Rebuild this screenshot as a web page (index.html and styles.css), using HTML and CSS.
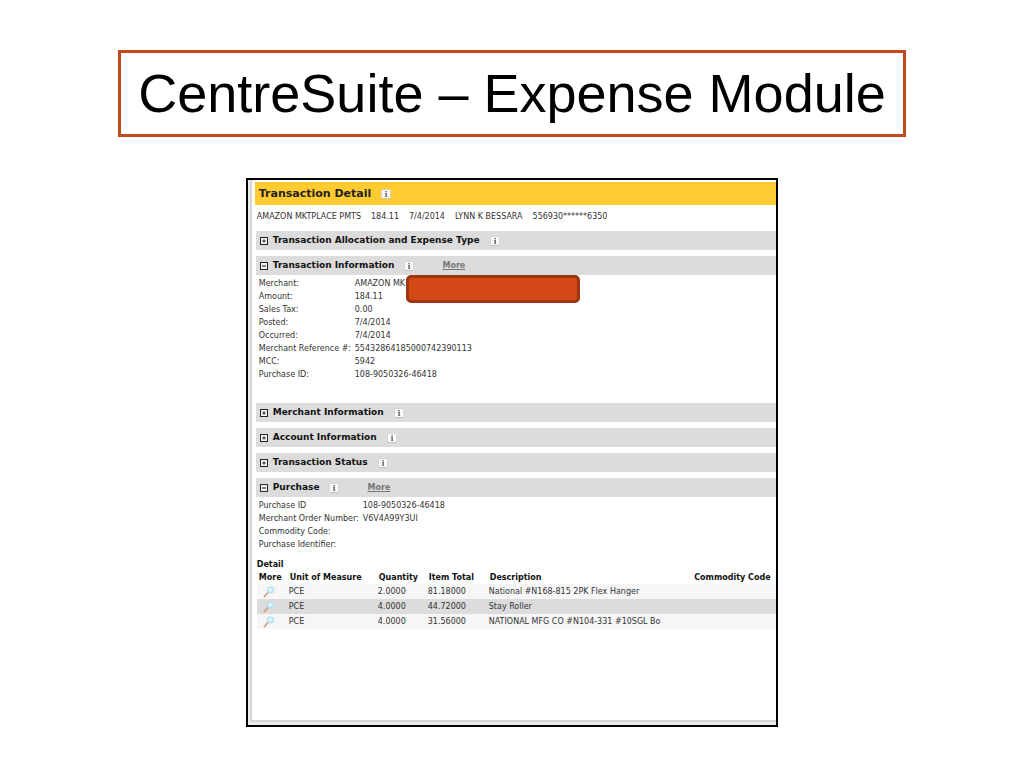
FILE: index.html
```html
<!DOCTYPE html>
<html lang="en">
<head>
  <meta charset="UTF-8" />
  <meta name="viewport" content="width=device-width, initial-scale=1" />
  <title>CentreSuite – Expense Module</title>
  <link rel="stylesheet" href="styles.css">
</head>
<body>

<!-- shared icons -->
<svg class="sprite" aria-hidden="true">
  <symbol id="plus" viewBox="0 0 8 8">
    <rect x="0.5" y="0.5" width="7" height="7" fill="#f4f4f4" stroke="#222"/>
    <path d="M2.200 4h3.600M4 2.200v3.600" stroke="#222" stroke-width="0.900"/>
  </symbol>
  <symbol id="minus" viewBox="0 0 8 8">
    <rect x="0.5" y="0.5" width="7" height="7" fill="#f4f4f4" stroke="#222"/>
    <path d="M2 4h4" stroke="#111"/>
  </symbol>
  <symbol id="info" viewBox="0 0 10 10">
    <rect x="0.5" y="0.5" width="9" height="9" rx="1.5" fill="#fbfbfb" stroke="#d2d6da"/>
    <path d="M0.8 9.5h8.4" stroke="#b4babf" stroke-width="0.7"/>
    <path d="M4.400 2h1.400v1.200H4.400zM4 4h1.800v3h.5v.8H4v-.8h.5V4.800H4z" fill="#555"/>
  </symbol>
  <symbol id="magnifier" viewBox="0 0 12 12">
    <path d="M1 11l4-4.500" stroke="#d69a68" stroke-width="1.6"/>
    <circle cx="7.500" cy="4" r="3" fill="#d9f3fc" stroke="#9fd6ee"/>
    <path d="M6 4.200a1.600 1.600 0 0 1 1.500-1.700" fill="none" stroke="#fff"/>
    <path d="M10 6.500l1-1.500V1" fill="none" stroke="#cbe8f5" stroke-width="0.6"/>
  </symbol>
</svg>

<header class="slide-title">
  <h1>CentreSuite – Expense Module</h1>
</header>

<main class="frame">
  <div class="panel">
    <div class="panel-title">
      <h2>Transaction Detail</h2>
      <button class="icon-btn" aria-label="About transaction detail"><svg class="info"><use href="#info"/></svg></button>
    </div>

    <p class="summary">
      <span>AMAZON MKTPLACE PMTS</span>
      <span>184.11</span>
      <span>7/4/2014</span>
      <span>LYNN K BESSARA</span>
      <span>556930******6350</span>
    </p>

    <section class="group">
      <div class="bar">
        <button class="icon-btn" aria-label="Expand"><svg class="toggle"><use href="#plus"/></svg></button>
        <h3>Transaction Allocation and Expense Type</h3>
        <button class="icon-btn" aria-label="Info"><svg class="info"><use href="#info"/></svg></button>
      </div>
    </section>

    <section class="group">
      <div class="bar">
        <button class="icon-btn" aria-label="Collapse"><svg class="toggle"><use href="#minus"/></svg></button>
        <h3>Transaction Information</h3>
        <button class="icon-btn" aria-label="Info"><svg class="info"><use href="#info"/></svg></button>
        <a class="more" href="#">More</a>
      </div>
      <dl class="fields info-fields">
        <dt>Merchant:</dt><dd class="merchant">AMAZON MK<span class="redacted"></span></dd>
        <dt>Amount:</dt><dd>184.11</dd>
        <dt>Sales Tax:</dt><dd>0.00</dd>
        <dt>Posted:</dt><dd>7/4/2014</dd>
        <dt>Occurred:</dt><dd>7/4/2014</dd>
        <dt>Merchant Reference #:</dt><dd>55432864185000742390113</dd>
        <dt>MCC:</dt><dd>5942</dd>
        <dt>Purchase ID:</dt><dd>108-9050326-46418</dd>
      </dl>
    </section>

    <section class="group">
      <div class="bar">
        <button class="icon-btn" aria-label="Expand"><svg class="toggle"><use href="#plus"/></svg></button>
        <h3>Merchant Information</h3>
        <button class="icon-btn" aria-label="Info"><svg class="info"><use href="#info"/></svg></button>
      </div>
    </section>

    <section class="group">
      <div class="bar">
        <button class="icon-btn" aria-label="Expand"><svg class="toggle"><use href="#plus"/></svg></button>
        <h3>Account Information</h3>
        <button class="icon-btn" aria-label="Info"><svg class="info"><use href="#info"/></svg></button>
      </div>
    </section>

    <section class="group">
      <div class="bar">
        <button class="icon-btn" aria-label="Expand"><svg class="toggle"><use href="#plus"/></svg></button>
        <h3>Transaction Status</h3>
        <button class="icon-btn" aria-label="Info"><svg class="info"><use href="#info"/></svg></button>
      </div>
    </section>

    <section class="group">
      <div class="bar">
        <button class="icon-btn" aria-label="Collapse"><svg class="toggle"><use href="#minus"/></svg></button>
        <h3>Purchase</h3>
        <button class="icon-btn" aria-label="Info"><svg class="info"><use href="#info"/></svg></button>
        <a class="more" href="#">More</a>
      </div>
      <dl class="fields purchase-fields">
        <dt>Purchase ID</dt><dd>108-9050326-46418</dd>
        <dt>Merchant Order Number:</dt><dd>V6V4A99Y3UI</dd>
        <dt>Commodity Code:</dt><dd></dd>
        <dt>Purchase Identifier:</dt><dd></dd>
      </dl>
    </section>

    <table class="detail">
      <caption>Detail</caption>
      <colgroup>
        <col class="col-more">
        <col class="col-unit">
        <col class="col-qty">
        <col class="col-total">
        <col>
        <col class="col-code">
      </colgroup>
      <thead>
        <tr>
          <th>More</th>
          <th>Unit of Measure</th>
          <th>Quantity</th>
          <th>Item Total</th>
          <th>Description</th>
          <th>Commodity Code</th>
        </tr>
      </thead>
      <tbody>
        <tr>
          <td><button class="icon-btn" aria-label="More detail"><svg class="magnifier"><use href="#magnifier"/></svg></button></td>
          <td>PCE</td><td>2.0000</td><td>81.18000</td><td>National #N168-815 2PK Flex Hanger</td><td></td>
        </tr>
        <tr>
          <td><button class="icon-btn" aria-label="More detail"><svg class="magnifier"><use href="#magnifier"/></svg></button></td>
          <td>PCE</td><td>4.0000</td><td>44.72000</td><td>Stay Roller</td><td></td>
        </tr>
        <tr>
          <td><button class="icon-btn" aria-label="More detail"><svg class="magnifier"><use href="#magnifier"/></svg></button></td>
          <td>PCE</td><td>4.0000</td><td>31.56000</td><td>NATIONAL MFG CO #N104-331 #10SGL Bo</td><td></td>
        </tr>
      </tbody>
    </table>
  </div>
</main>

</body>
</html>
```

FILE: styles.css
```css
:root {
  --orange: #c44a1c;
  --yellow: #ffcb31;
  --bar: #dcdcdc;
  --text: #333;
}

* {
  box-sizing: border-box;
  margin: 0;
  padding: 0;
}

body {
  background: #fff;
  color: var(--text);
  font-family: "DejaVu Sans", Verdana, sans-serif;
  font-size: 8px;
  display: flex;
  flex-direction: column;
  align-items: center;
  gap: 41px;
  padding: 50px 0 40px;
}

.sprite {
  position: absolute;
  width: 0;
  height: 0;
}

.slide-title {
  width: 77%;
  padding: 10px 0;
  border: 3px solid var(--orange);
  text-align: center;
}

.slide-title h1 {
  font-family: "Liberation Sans", Arial, sans-serif;
  font-size: 54px;
  font-weight: normal;
  line-height: 61px;
  color: #000;
  white-space: nowrap;
}

.frame {
  width: 52%;
  border: 2px solid #000;
  background: #ebebeb;
  padding: 0 0 3px 2px;
}

.panel {
  border-left: 2px solid #d4d4d4;
  border-bottom: 2px solid #d4d4d4;
  background: #fff;
  padding: 2px 0 91px 3px;
  overflow: hidden;
}

.panel-title {
  display: flex;
  align-items: center;
  gap: 10px;
  height: 23px;
  padding-left: 4px;
  background: var(--yellow);
}

.panel-title h2 {
  font-size: 11px;
  line-height: 23px;
  color: #222;
}

.icon-btn {
  display: flex;
  border: none;
  background: none;
  cursor: pointer;
}

.toggle {
  width: 8px;
  height: 8px;
}

.info {
  width: 10px;
  height: 10px;
}

.magnifier {
  width: 12px;
  height: 12px;
}

.summary {
  display: flex;
  gap: 10px;
  padding: 5px 0 7px 2px;
  line-height: 14px;
  white-space: nowrap;
}

.group {
  margin: 0 0 6px 1px;
}

.bar {
  display: flex;
  align-items: center;
  height: 19px;
  padding-left: 4px;
  background: var(--bar);
}

.bar h3 {
  margin: 0 10px 0 5px;
  font-size: 9px;
  line-height: 19px;
  color: #111;
}

.more {
  margin-left: 28px;
  font-weight: bold;
  color: #777;
}

.fields {
  display: grid;
  grid-auto-rows: 13px;
  line-height: 13px;
  padding: 2px 0 0 3px;
  white-space: nowrap;
}

.info-fields {
  grid-template-columns: 96px 1fr;
  padding-bottom: 16px;
}

.purchase-fields {
  grid-template-columns: 104px 1fr;
}

.merchant {
  position: relative;
}

/* covers the rest of the merchant name */
.redacted {
  position: absolute;
  top: -2px;
  left: 51px;
  width: 174px;
  height: 28px;
  border: 3px solid #9c3510;
  border-radius: 5px;
  background: #d24817;
}

.detail {
  width: 100%;
  margin-left: 2px;
  border-collapse: collapse;
  table-layout: fixed;
  white-space: nowrap;
}

.detail caption {
  padding-top: 2px;
  text-align: left;
  font-weight: bold;
  line-height: 12px;
  color: #111;
}

.detail th {
  height: 13px;
  padding-left: 2px;
  text-align: left;
  color: #111;
}

.detail td {
  height: 15px;
  padding-left: 1px;
}

.detail td:first-child {
  padding-left: 6px;
}

.detail tbody tr {
  background: #f6f6f6;
}

.detail tbody tr:nth-child(even) {
  background: var(--bar);
}

.col-more {
  width: 31px;
}

.col-unit {
  width: 89px;
}

.col-qty {
  width: 50px;
}

.col-total {
  width: 61px;
}

.col-code {
  width: 86px;
}
```
